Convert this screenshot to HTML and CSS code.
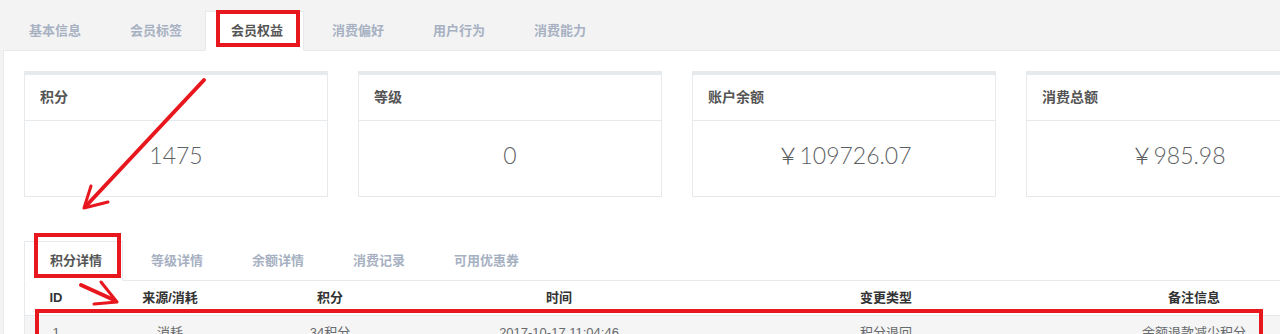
FILE: index.html
```html
<!DOCTYPE html>
<html lang="zh-CN">
<head>
    <meta charset="UTF-8">
    <meta name="viewport" content="width=device-width, initial-scale=1.0">
    <title>会员权益</title>
    <link rel="stylesheet" href="styles.css">
</head>
<body>
    <div class="page">
        <ul class="tabs">
            <li><a>基本信息</a></li>
            <li><a>会员标签</a></li>
            <li class="active"><a>会员权益</a></li>
            <li><a>消费偏好</a></li>
            <li><a>用户行为</a></li>
            <li><a>消费能力</a></li>
        </ul>

        <div class="panel">
            <div class="cards">
                <div class="ibox">
                    <div class="ibox-title">积分</div>
                    <div class="ibox-content">1475</div>
                </div>
                <div class="ibox">
                    <div class="ibox-title">等级</div>
                    <div class="ibox-content">0</div>
                </div>
                <div class="ibox">
                    <div class="ibox-title">账户余额</div>
                    <div class="ibox-content">￥109726.07</div>
                </div>
                <div class="ibox">
                    <div class="ibox-title">消费总额</div>
                    <div class="ibox-content">￥985.98</div>
                </div>
            </div>

            <div class="details">
                <ul class="tabs">
                    <li class="active"><a>积分详情</a></li>
                    <li><a>等级详情</a></li>
                    <li><a>余额详情</a></li>
                    <li><a>消费记录</a></li>
                    <li><a>可用优惠券</a></li>
                </ul>
                <div class="details-body">
                    <table>
                        <colgroup>
                            <col style="width: 62px">
                            <col style="width: 166px">
                            <col style="width: 154px">
                            <col style="width: 304px">
                            <col style="width: 350px">
                            <col style="width: 266px">
                        </colgroup>
                        <thead>
                            <tr>
                                <th>ID</th>
                                <th>来源/消耗</th>
                                <th>积分</th>
                                <th>时间</th>
                                <th>变更类型</th>
                                <th>备注信息</th>
                            </tr>
                        </thead>
                        <tbody>
                            <tr>
                                <td>1</td>
                                <td>消耗</td>
                                <td>34积分</td>
                                <td>2017-10-17 11:04:46</td>
                                <td>积分退回</td>
                                <td>余额退款减少积分</td>
                            </tr>
                        </tbody>
                    </table>
                </div>
            </div>
        </div>

        <!-- annotations drawn over the screenshot -->
        <div class="mark mark-tab"></div>
        <div class="mark mark-subtab"></div>
        <div class="mark mark-row"></div>
        <svg class="arrows" width="1280" height="334" viewBox="0 0 1280 334">
            <g fill="none" stroke="#e8161d" stroke-linecap="round" stroke-linejoin="round">
                <line x1="204" y1="80" x2="86" y2="206" stroke-width="4"/>
                <polyline points="91,186 84,208 108,202" stroke-width="3"/>
                <line x1="81" y1="285" x2="114" y2="300" stroke-width="4"/>
                <polyline points="101,282 117,302 94,304" stroke-width="3"/>
            </g>
        </svg>
    </div>
</body>
</html>
```

FILE: styles.css
```css
body {
    margin: 0;
    background-color: #f3f3f4;
    font-family: 'Liberation Sans', 'Noto Sans CJK SC', sans-serif;
    font-size: 13px;
    color: #676a6c;
    overflow: hidden;
}

.page {
    position: relative;
    width: 1348px;
    padding-left: 3px;
}

.tabs {
    display: flex;
    list-style: none;
    margin: 0;
    padding: 11px 0 0;
    border-bottom: 1px solid #e7eaec;
}

.tabs li {
    margin-right: 2px;
    margin-bottom: -1px;
}

.tabs a {
    display: block;
    padding: 10px 20px 10px 25px;
    line-height: 18px;
    border: 1px solid transparent;
    color: #a7b1c2;
    font-weight: bold;
}

.tabs .active a {
    background: white;
    color: #555;
    border-color: #e7eaec;
    border-bottom-color: white;
}

.panel {
    background: white;
    border: 1px solid #e7eaec;
    border-top: none;
    padding: 20px;
}

.cards {
    display: grid;
    grid-template-columns: repeat(4, 304px);
    gap: 30px;
}

.ibox {
    border: 1px solid #e7eaec;
    border-top: 4px solid #e7eaec;
}

.ibox-title {
    height: 45px;
    line-height: 45px;
    padding: 0 15px;
    border-bottom: 1px solid #e7eaec;
    font-size: 14px;
    font-weight: bold;
    color: #555;
}

.ibox-content {
    padding: 16px 0 23px;
    line-height: 36px;
    text-align: center;
    font-family: 'Lato', 'Noto Sans CJK SC', sans-serif;
    font-weight: 300;
    font-size: 23px;
    color: #5e6164;
}

.details {
    margin-top: 44px;
}

.details .tabs {
    padding-top: 0;
}

.details-body {
    border: 1px solid #e7eaec;
    border-top: none;
}

table {
    border-collapse: collapse;
    table-layout: fixed;
}

th, td {
    padding: 8px 0;
    line-height: 18px;
    text-align: center;
    white-space: nowrap;
}

th {
    color: #333;
    font-weight: bold;
    border-bottom: 1px solid #e7eaec;
}

tbody tr:nth-child(odd) {
    background: #f5f5f5;
}

.mark {
    position: absolute;
    border: 4px solid #e8161d;
    box-sizing: border-box;
}

.mark-tab {
    left: 216px;
    top: 10px;
    width: 84px;
    height: 37px;
}

.mark-subtab {
    left: 34px;
    top: 233px;
    width: 87px;
    height: 45px;
}

.mark-row {
    left: 35px;
    top: 309px;
    width: 1228px;
    height: 60px;
}

.arrows {
    position: absolute;
    left: 0;
    top: 0;
}
```
